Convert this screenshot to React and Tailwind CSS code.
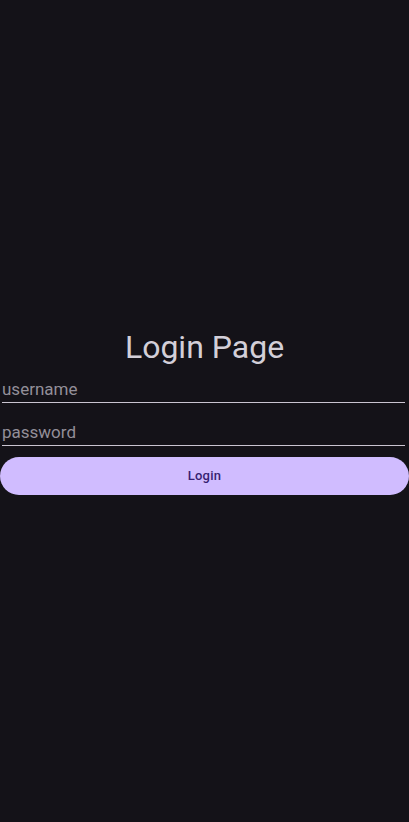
import React, { useState } from 'react';

export default function App() {
  const [username, setUsername] = useState('');
  const [password, setPassword] = useState('');

  return (
    <div
      className="min-h-screen bg-[#141218] flex flex-col justify-center"
      style={{ fontFamily: 'Roboto, "Noto Sans", sans-serif' }}
    >
      <h1 className="text-center text-[32px] leading-[40px] text-[#d3cfd8]">Login Page</h1>

      {/* Fields */}
      <div className="ml-[2px] mr-[4px] flex flex-col">
        <input
          value={username}
          onChange={(e) => setUsername(e.target.value)}
          placeholder="username"
          className="w-full bg-transparent pt-[13px] pb-[4px] text-[17px] leading-[18px] text-[#e6e0e9] placeholder:text-[#938f99] border-b border-[#cac4d0] outline-none"
        />
        <input
          type="password"
          value={password}
          onChange={(e) => setPassword(e.target.value)}
          placeholder="password"
          className="w-full bg-transparent mt-[7px] pt-[13px] pb-[4px] text-[17px] leading-[18px] text-[#e6e0e9] placeholder:text-[#938f99] border-b border-[#cac4d0] outline-none"
        />
      </div>

      <button className="mt-[11px] h-[38px] w-full rounded-full bg-[#d0bcff] text-[#381e72] text-[13px] font-medium tracking-[0.2px]">
        Login
      </button>
    </div>
  );
}
